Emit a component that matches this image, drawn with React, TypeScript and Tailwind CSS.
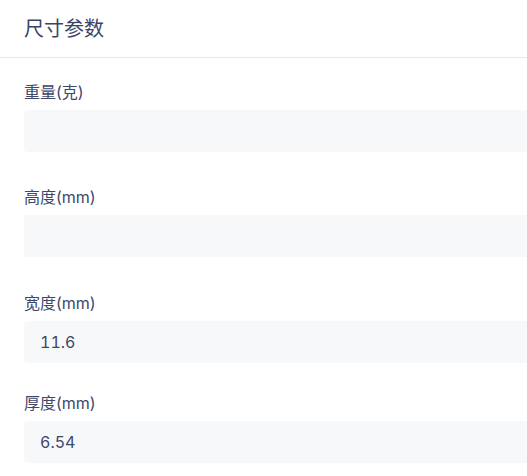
import React from "react";

const items = [
  { label: "重量(克)", value: "", mb: "mb-[34px]" },
  { label: "高度(mm)", value: "", mb: "mb-[35px]" },
  { label: "宽度(mm)", value: "11.6", mb: "mb-[29px]" },
  { label: "厚度(mm)", value: "6.54", mb: "mb-[14px]" },
];

export default function App() {
  return (
    <div
      className="w-[527px] h-[476px] overflow-hidden bg-white text-[#3b4668]"
      style={{ fontFamily: 'Inter, "Noto Sans CJK SC", sans-serif' }}
    >
      <div className="h-[58px] border-b border-[#e5e7eb] flex items-center px-6">
        <span className="text-[20px] leading-none text-[#3a4566]">尺寸参数</span>
      </div>
      <div className="pl-6 pt-[23px]">
        {items.map((it) => (
          <div key={it.label} className={it.mb}>
            <div className="h-[22px] mb-[7px] flex items-center text-[16px] leading-none text-[#3d486a]">
              {it.label}
            </div>
            <div className="w-[560px] h-[42px] rounded-[4px] bg-[#f7f8fa] flex items-center px-4 text-[16px] tabular-nums text-[#3d486a]">
              {it.value}
            </div>
          </div>
        ))}
      </div>
    </div>
  );
}
